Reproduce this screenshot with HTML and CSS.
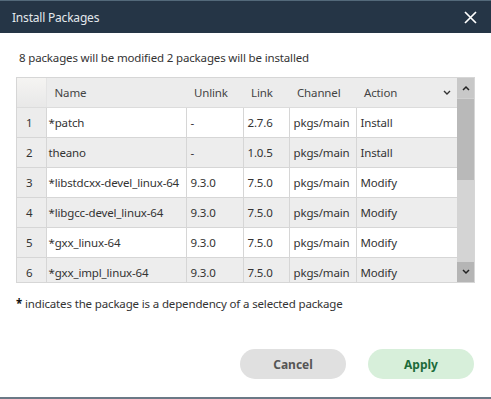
FILE: index.html
```html
<!DOCTYPE html>
<html lang="en">
<head>
    <meta charset="UTF-8">
    <title>Install Packages</title>
    <link rel="stylesheet" href="styles.css">
</head>
<body>
    <div class="dialog">
        <div class="titlebar">
            <span class="title">Install Packages</span>
            <svg class="close" width="13" height="13" viewBox="0 0 13 13">
                <path d="M1 1 L12 12 M12 1 L1 12" stroke="#fff" stroke-width="1.7" fill="none"/>
            </svg>
        </div>
        <div class="content">
            <p class="message">8 packages will be modified 2 packages will be installed</p>
            <div class="grid">
                <div class="table-area">
                    <table>
                        <colgroup>
                            <col class="w-num">
                            <col class="w-name">
                            <col class="w-unlink">
                            <col class="w-link">
                            <col class="w-channel">
                            <col class="w-action">
                        </colgroup>
                        <thead>
                            <tr>
                                <th class="corner"></th>
                                <th>Name</th>
                                <th>Unlink</th>
                                <th>Link</th>
                                <th>Channel</th>
                                <th>Action
                                    <svg class="sort" width="8" height="6" viewBox="0 0 8 6"><path d="M1 1 L4 4 L7 1" stroke="#333" stroke-width="1.4" fill="none"/></svg>
                                </th>
                            </tr>
                        </thead>
                        <tbody>
                            <tr><td class="num">1</td><td class="name">*patch</td><td>-</td><td>2.7.6</td><td>pkgs/main</td><td>Install</td></tr>
                            <tr class="alt"><td class="num">2</td><td class="name">theano</td><td>-</td><td>1.0.5</td><td>pkgs/main</td><td>Install</td></tr>
                            <tr><td class="num">3</td><td class="name">*libstdcxx-devel_linux-64</td><td>9.3.0</td><td>7.5.0</td><td>pkgs/main</td><td>Modify</td></tr>
                            <tr class="alt"><td class="num">4</td><td class="name">*libgcc-devel_linux-64</td><td>9.3.0</td><td>7.5.0</td><td>pkgs/main</td><td>Modify</td></tr>
                            <tr><td class="num">5</td><td class="name">*gxx_linux-64</td><td>9.3.0</td><td>7.5.0</td><td>pkgs/main</td><td>Modify</td></tr>
                            <tr class="alt"><td class="num">6</td><td class="name">*gxx_impl_linux-64</td><td>9.3.0</td><td>7.5.0</td><td>pkgs/main</td><td>Modify</td></tr>
                        </tbody>
                    </table>
                </div>
                <div class="scrollbar">
                    <div class="sb-btn sb-up">
                        <svg width="8" height="6" viewBox="0 0 8 6"><path d="M1 5 L4 2 L7 5" stroke="#222" stroke-width="1.5" fill="none"/></svg>
                    </div>
                    <div class="sb-thumb"></div>
                    <div class="sb-track"></div>
                    <div class="sb-btn sb-down">
                        <svg width="8" height="6" viewBox="0 0 8 6"><path d="M1 1 L4 4 L7 1" stroke="#222" stroke-width="1.5" fill="none"/></svg>
                    </div>
                </div>
            </div>
            <p class="note"><b>*</b> indicates the package is a dependency of a selected package</p>
            <div class="buttons">
                <button class="btn cancel">Cancel</button>
                <button class="btn apply">Apply</button>
            </div>
        </div>
    </div>
</body>
</html>
```

FILE: styles.css
```css
body {
    margin: 0;
    padding: 0;
    background-color: white;
    font-family: "Noto Sans", "Open Sans", sans-serif;
    color: #333;
}
.dialog {
    height: 399px;
    display: flex;
    flex-direction: column;
    box-sizing: border-box;
    border-bottom: 2px solid #6b7986;
}
.titlebar {
    height: 33px;
    background-color: #253546;
    border-top: 1px solid #53697a;
    box-sizing: border-box;
    display: flex;
    align-items: center;
    justify-content: space-between;
    padding: 0 14px 0 12px;
}
.title {
    color: #e3e8ec;
    font-size: 12px;
    letter-spacing: -0.2px;
}
.close {
    display: block;
}
.content {
    flex: 1;
    padding: 0 16px 0 16px;
}
.message {
    margin: 16px 0 0 3px;
    font-size: 11.5px;
    letter-spacing: -0.15px;
    line-height: 18px;
}
.grid {
    margin-top: 10px;
    width: 457px;
    height: 204px;
    border: 1px solid #d6d6d6;
    display: flex;
}
.table-area {
    width: 440px;
    height: 204px;
    overflow: hidden;
}
table {
    border-collapse: collapse;
    table-layout: fixed;
    width: 440px;
    font-size: 11.5px;
    letter-spacing: -0.15px;
}
.w-num { width: 29px; }
.w-name { width: 140px; }
.w-unlink { width: 57px; }
.w-link { width: 46px; }
.w-channel { width: 67px; }
.w-action { width: 101px; }
th {
    height: 29px;
    padding: 0 0 0 8px;
    background-color: #ececec;
    font-weight: normal;
    text-align: left;
    color: #444;
    border-bottom: 1px solid #dcdcdc;
}
th.corner {
    background: linear-gradient(#f5f4f2, #e8e8e8);
    padding: 0;
    border-right: 1px solid #e4e4e4;
}
.sort {
    float: right;
    margin: 5px 6px 0 0;
}
td {
    height: 29px;
    padding: 0 0 0 4px;
    border: 1px solid #d6d6d6;
    border-top: none;
    white-space: nowrap;
    overflow: hidden;
}
td.name {
    padding-left: 2px;
}
td.num {
    padding-left: 9px;
    background-color: #ececec;
    border-left: none;
}
tr.alt td {
    background-color: #ededed;
}
td:last-child {
    border-right: none;
}
.scrollbar {
    width: 17px;
    display: flex;
    flex-direction: column;
    background-color: #d4d4d4;
}
.sb-btn {
    height: 20px;
    display: flex;
    align-items: center;
    justify-content: center;
}
.sb-up {
    background-color: #c8c8c8;
}
.sb-down {
    background-color: #b5b5b5;
}
.sb-thumb {
    height: 81px;
    background-color: #b9b9b9;
    border-top: 1px solid #d0d0d0;
}
.sb-track {
    flex: 1;
}
.note {
    margin: 13px 0 0 0;
    font-size: 11.5px;
    letter-spacing: -0.15px;
}
.note b {
    color: #111;
}
.buttons {
    display: flex;
    justify-content: flex-end;
    gap: 22px;
    margin-top: 38px;
    padding-right: 1px;
}
.btn {
    width: 106px;
    height: 30px;
    border: none;
    border-radius: 15px;
    font-family: "Noto Sans", "Open Sans", sans-serif;
    font-size: 12px;
    font-weight: bold;
}
.cancel {
    background-color: #e0e0e0;
    color: #555;
}
.apply {
    background-color: #d7efda;
    color: #1d6b3a;
}
```
